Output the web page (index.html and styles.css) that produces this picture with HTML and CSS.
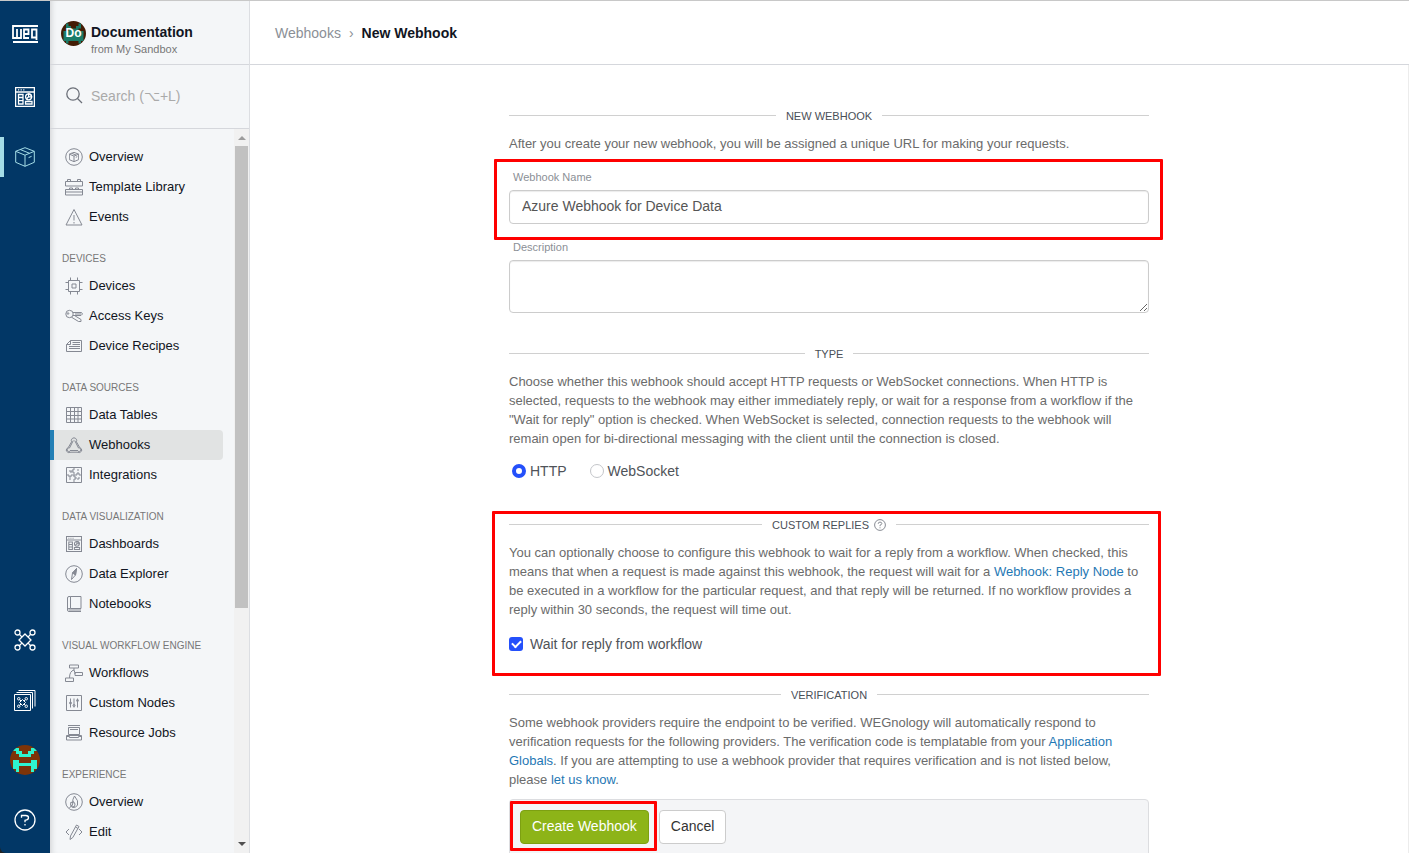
FILE: index.html
```html
<!DOCTYPE html>
<html lang="en">
<head>
    <meta charset="UTF-8">
    <meta name="viewport" content="width=device-width, initial-scale=1.0">
    <title>New Webhook</title>
    <link rel="stylesheet" href="styles.css">
</head>
<body>
    <svg class="defs" width="0" height="0" aria-hidden="true">
        <symbol id="dashboard" viewBox="0 0 20 20">
            <path d="M.6.6h18.800v18.800H.6zM.6 5h18.800M3 2.800h1.200M5.600 2.800h1.200M8.200 2.800h1.200M3.500 7.500h4.500v9.500h-4.500zM3.500 10.500h4.500M3.500 13.700h4.500M10.500 14.500h6.500v2.500h-6.500z"/>
            <circle cx="13.600" cy="9.800" r="3"/>
            <path d="M13.600 9.800V6.800a3 3 0 0 1 3 3zM13.600 9.800l-2 2"/>
        </symbol>
        <symbol id="nodes" viewBox="0 0 22 22">
            <path d="M11 5l6 6-6 6-6-6zM5.300 5.300l2.800 2.800M16.700 5.300l-2.800 2.800M5.300 16.700l2.800-2.800M16.700 16.700l-2.800-2.800"/>
            <circle cx="3.500" cy="3.500" r="2.500"/><circle cx="18.500" cy="3.500" r="2.500"/>
            <circle cx="3.500" cy="18.500" r="2.500"/><circle cx="18.500" cy="18.500" r="2.500"/>
        </symbol>
        <symbol id="cube" viewBox="0 0 20 20">
            <path d="M10 .7l9.300 3.600v11L10 19.300.7 15.300v-11zM.7 4.300L10 8.200l9.300-3.900M10 8.200v11.100M5.200 2.500l9.400 3.800M16.600 9.300l-3 1.300"/>
        </symbol>
    </svg>

    <div class="app">
        <nav class="rail">
            <a class="rail-item rail-logo" href="#" aria-label="Home">
                <svg width="26" height="18" viewBox="0 0 26 18">
                    <path class="weg" d="M26 1H1v12h8V4M5 4v9M17 13h-5V4.500h4.500v4.500H12M24.500 12.500H20v-8h4.500V15M1 17h25"/>
                </svg>
            </a>
            <a class="rail-item" href="#" aria-label="Dashboards"><svg class="thick" width="20" height="20"><use href="#dashboard"/></svg></a>
            <a class="rail-item current" href="#" aria-label="Applications"><svg width="20" height="20"><use href="#cube"/></svg></a>
            <a class="rail-item bottom-start" href="#" aria-label="Workflows"><svg class="thick" width="22" height="22"><use href="#nodes"/></svg></a>
            <a class="rail-item" href="#" aria-label="Templates">
                <svg width="22" height="22" viewBox="0 0 22 22">
                    <path d="M.5 5.500h16v16H.5zM2.500 3.500h16v16M4.500 1.500h16.500v16"/>
                    <use href="#nodes" x="3" y="8" width="11" height="11" class="mini"/>
                </svg>
            </a>
            <a class="rail-item" href="#" aria-label="Account">
                <svg class="face" width="30" height="30" viewBox="0 0 10 10">
                    <rect width="10" height="10" fill="#7d3408"/>
                    <path fill="#2ef5cf" d="M1 1h2v1h1v1h2V2h1V1h2v1H8v1H7v1H3V3H2V2H1zM1 5h2v1h4V5h2v3H8v1H7V7H3v2H2V8H1z"/>
                </svg>
            </a>
            <a class="rail-item" href="#" aria-label="Help">
                <svg class="thick" width="22" height="22" viewBox="0 0 22 22">
                    <circle cx="11" cy="11" r="10"/>
                    <path d="M7.500 8.700V6.500h4.200q2.800 0 2.800 2.200t-3.500 2.600v2M11 15v1.500"/>
                </svg>
            </a>
        </nav>

        <aside class="sidebar">
            <div class="app-head">
                <div class="avatar">
                    <svg width="25" height="25" viewBox="0 0 10 10">
                        <rect width="10" height="10" fill="#431c05"/>
                        <path fill="#1b7b68" d="M2 1h1v1h1v1h2V2h1V1h1v2H7v1h2v4H8v1H7V8H3v1H2V8H1V4h2V3H2z"/>
                    </svg>
                    <span>Do</span>
                </div>
                <div class="app-title">
                    <div class="app-name">Documentation</div>
                    <div class="app-owner">from My Sandbox</div>
                </div>
            </div>
            <label class="search">
                <svg class="thick" width="17" height="17" viewBox="0 0 17 17"><circle cx="7" cy="7" r="6.200"/><path d="M11.500 11.500l4.500 4.500"/></svg>
                <input type="search" placeholder="Search (⌥+L)" aria-label="Search">
            </label>
            <div class="menu-wrap">
                <div class="menu">
                    <a class="menu-item" href="#"><svg viewBox="0 0 18 18"><circle cx="9" cy="9" r="8.300"/><use href="#cube" x="4" y="4" width="10" height="10" class="mini"/></svg>Overview</a>
                    <a class="menu-item" href="#"><svg viewBox="0 0 18 18"><path d="M.5 3.500h17v4.500H.5zM.5 11.500h17v5.500H.5zM.5 14h17M2.500 3.500v-2h3v2M12.500 3.500v-2h3v2M4.500 11.500V10h3v1.500M10.500 11.500V10h3v1.500"/></svg>Template Library</a>
                    <a class="menu-item" href="#"><svg viewBox="0 0 18 18"><path d="M9 1.500l8 15.500H1zM9 7v5.500M9 14v1.500"/></svg>Events</a>

                    <h2>DEVICES</h2>
                    <a class="menu-item" href="#"><svg viewBox="0 0 18 18"><path d="M3.500 3.500h11v11h-11zM7 7h4v4H7zM5.500.5v3M12.500.5v3M5.500 14.500v3M12.500 14.500v3M.5 5.500h3M.5 12.500h3M14.500 5.500h3M14.500 12.500h3"/></svg>Devices</a>
                    <a class="menu-item" href="#"><svg viewBox="0 0 18 18"><circle cx="4.500" cy="7" r="3.700"/><circle cx="3" cy="6.500" r=".8"/><path d="M8 5.500h8.500l1 1.500-1.500 1.500H8M10 7h6M6.500 10.200l7 4.300h2.500v-2l-6.500-4"/></svg>Access Keys</a>
                    <a class="menu-item" href="#"><svg viewBox="0 0 18 18"><path d="M5.500 3.500h11v11h-15v-7zM5.500 3.500v4h-4M7.500 5.500h7.500M7.500 7.500h7.500M4 9.500h11M4 11.500h11"/></svg>Device Recipes</a>

                    <h2>DATA SOURCES</h2>
                    <a class="menu-item" href="#"><svg viewBox="0 0 18 18"><path d="M1.500 1.500h15v15h-15zM1.500 5.500h15M1.500 9.500h15M1.500 13h15M5.500 1.500v15M9.500 1.500v15M13 1.500v15"/></svg>Data Tables</a>
                    <a class="menu-item active" href="#"><svg viewBox="0 0 18 18"><path d="M6.600 5.800a2.700 2.700 0 1 1 4.800 0M8.300 4.500L4.500 12M9.700 4.500l3.800 7.500M5 14.500h8M4.500 12a1.800 1.800 0 1 0 .5 3.200M13.500 12a1.800 1.800 0 1 1-.5 3.200M6.600 5.800L3.300 11.500q-2.500 1-2 3.500 1.500 2.500 4.700 1.200h6q3.200 1.300 4.700-1.200.5-2.500-2-3.500L11.400 5.800"/></svg>Webhooks</a>
                    <a class="menu-item" href="#"><svg viewBox="0 0 18 18"><path d="M1.500 1.500h15v15h-15zM9 1.500v2.500H7v2h2v2.500M16.500 9H14V7h-2v2H9v2h2v2H9v3.500M1.500 9H4v2h2V9h3M4 5h2v2M12 4h2M12 13h2v-2M4 13h2"/></svg>Integrations</a>

                    <h2>DATA VISUALIZATION</h2>
                    <a class="menu-item" href="#"><svg class="thick" viewBox="0 0 18 18"><use href="#dashboard" x="1" y="1" width="16" height="16"/></svg>Dashboards</a>
                    <a class="menu-item" href="#"><svg viewBox="0 0 18 18"><circle cx="9" cy="9" r="8.300"/><path d="M11.500 3.500L10.500 10 6.500 14.500l1-6.500z"/><path class="solid" d="M11.500 3.500L10.500 10l-3-2z"/></svg>Data Explorer</a>
                    <a class="menu-item" href="#"><svg viewBox="0 0 18 18"><path d="M5.500 1.500h10.500v12H5.500zM5.500 1.500H4q-1.500 0-1.500 1.500v12q0 1.500 1.500 1.500h12M5.500 13.500H4q-1.500 0-1.500 1.500M4 15h12"/></svg>Notebooks</a>

                    <h2>VISUAL WORKFLOW ENGINE</h2>
                    <a class="menu-item" href="#"><svg viewBox="0 0 18 18"><path d="M4.500 1h9v3h-9zM10 8.500h7.500v3H10zM.5 14h8v3.500h-8zM9 4v2q-4.500 1-4.500 8M9 6q1 2.500 1 4"/></svg>Workflows</a>
                    <a class="menu-item" href="#"><svg viewBox="0 0 18 18"><path d="M1.500 1.500h15v15h-15zM5.500 4.500v9M9 4.500v9M12.500 4.500v9"/><circle cx="5.500" cy="9" r="1"/><circle cx="9" cy="11.500" r="1"/><circle cx="12.500" cy="6.500" r="1"/></svg>Custom Nodes</a>
                    <a class="menu-item" href="#"><svg viewBox="0 0 18 18"><path d="M3 1.500h12M3.500 3.500h11v7h-11zM1.500 11.500h15v4.500h-15zM1.500 12.500h3v1h9v-1h3M5 5.500h8"/></svg>Resource Jobs</a>

                    <h2>EXPERIENCE</h2>
                    <a class="menu-item" href="#"><svg viewBox="0 0 18 18"><circle cx="9" cy="9" r="8.300"/><path d="M9.500 3q4.500 5 3 9-1.500 3-4.500 2.500-3.500-1-2-5.500l1.500 1q0-4 2-7zM8.500 8.500q2.500 2.500 1 5-2 1-2.500-1zM4.500 15l3-3.500"/></svg>Overview</a>
                    <a class="menu-item" href="#"><svg viewBox="0 0 18 18"><path d="M4 6L1 9l3 3M14 6l3 3-3 3M5.500 13L11.500 2l2.500 1.500L7.800 14.500 5 16.500zM10.500 4l2.500 1.500"/></svg>Edit</a>
                </div>
                <div class="scrollbar" aria-hidden="true">
                    <i class="arrow up"></i>
                    <div class="track"><div class="thumb"></div></div>
                    <i class="arrow down"></i>
                </div>
            </div>
        </aside>

        <div class="page">
            <header class="crumbs">
                <a href="#">Webhooks</a>
                <span class="sep">›</span>
                <strong>New Webhook</strong>
            </header>
            <main class="content">
                <form class="webhook-form">
                    <section>
                        <h3 class="divider">NEW WEBHOOK</h3>
                        <p>After you create your new webhook, you will be assigned a unique URL for making your requests.</p>
                        <div class="field marked mark-name">
                            <label for="name">Webhook Name</label>
                            <input type="text" id="name" value="Azure Webhook for Device Data">
                        </div>
                        <div class="field last">
                            <label for="description">Description</label>
                            <textarea id="description"></textarea>
                        </div>
                    </section>

                    <section>
                        <h3 class="divider">TYPE</h3>
                        <p>Choose whether this webhook should accept HTTP requests or WebSocket connections. When HTTP is selected, requests to the webhook may either immediately reply, or wait for a response from a workflow if the "Wait for reply" option is checked. When WebSocket is selected, connection requests to the webhook will remain open for bi-directional messaging with the client until the connection is closed.</p>
                        <div class="radios">
                            <label><input type="radio" name="type" checked>HTTP</label>
                            <label><input type="radio" name="type">WebSocket</label>
                        </div>
                    </section>

                    <section class="marked mark-replies">
                        <h3 class="divider">
                            <span>CUSTOM REPLIES</span>
                            <svg width="12" height="12" viewBox="0 0 12 12"><circle cx="6" cy="6" r="5.400"/><path d="M4.200 4.800q0-1.700 1.800-1.700t1.800 1.500q0 1-1.800 1.600v1M6 8.300v1"/></svg>
                        </h3>
                        <p>You can optionally choose to configure this webhook to wait for a reply from a workflow. When checked, this means that when a request is made against this webhook, the request will wait for a <a href="#">Webhook: Reply Node</a> to be executed in a workflow for the particular request, and that reply will be returned. If no workflow provides a reply within 30 seconds, the request will time out.</p>
                        <label class="check"><input type="checkbox" checked>Wait for reply from workflow</label>
                    </section>

                    <section>
                        <h3 class="divider">VERIFICATION</h3>
                        <p class="tight">Some webhook providers require the endpoint to be verified. WEGnology will automatically respond to verification requests for the following providers. The verification code is templatable from your <a href="#">Application Globals</a>. If you are attempting to use a webhook provider that requires verification and is not listed below, please <a href="#">let us know</a>.</p>
                    </section>

                    <div class="actions">
                        <div class="marked mark-create">
                            <button type="submit" class="btn btn-primary">Create Webhook</button>
                        </div>
                        <button type="button" class="btn">Cancel</button>
                    </div>
                </form>
            </main>
        </div>
    </div>
</body>
</html>
```
FILE: styles.css
```css
* {
    box-sizing: border-box;
}
body {
    margin: 0;
    font-family: "Liberation Sans", Arial, sans-serif;
    font-size: 14px;
    line-height: 20px;
    color: #4f5359;
    background-color: #222;
}
a {
    color: #1f78b4;
    text-decoration: none;
}
svg {
    display: block;
    flex: none;
    fill: none;
    stroke: currentColor;
}
.defs {
    position: absolute;
}
.mini {
    stroke-width: 2;
}
.thick {
    stroke-width: 1.3;
}
.app {
    display: flex;
    height: 100vh;
    border-top: 1px solid #c8c8c8;
    overflow: hidden;
}

/* Left rail */
.rail {
    display: flex;
    flex-direction: column;
    gap: 20px;
    flex: none;
    width: 50px;
    padding: 13px 0;
    background-color: #023766;
    border-bottom-left-radius: 6px;
}
.rail-item {
    display: flex;
    align-items: center;
    justify-content: center;
    height: 40px;
    color: #fff;
    border-left: 4px solid transparent;
    padding-right: 4px;
}
.rail-logo {
    margin-bottom: 3px;
}
.weg {
    stroke-width: 1.8;
}
.rail-item.current {
    color: #a4dce6;
    border-left-color: #a4dce6;
}
.bottom-start {
    margin-top: auto;
}
.face {
    border-radius: 50%;
    stroke: none;
}

/* Sidebar */
.sidebar {
    display: flex;
    flex-direction: column;
    flex: none;
    width: 200px;
    background-color: #f4f6f8;
    border-right: 1px solid #dcdee2;
    box-shadow: inset 6px 0 6px -5px rgba(0, 0, 0, 0.16);
}
.app-head {
    display: flex;
    gap: 5px;
    flex: none;
    height: 64px;
    padding: 20px 11px 0;
    border-bottom: 1px solid #d5d7dc;
}
.avatar {
    position: relative;
    width: 25px;
    height: 25px;
    border-radius: 50%;
    overflow: hidden;
}
.avatar svg {
    stroke: none;
}
.avatar span {
    position: absolute;
    inset: 0;
    color: #fff;
    font-size: 12px;
    font-weight: bold;
    line-height: 24px;
    text-align: center;
}
.app-title {
    padding-top: 2px;
}
.app-name {
    color: #111522;
    font-weight: bold;
    line-height: 18px;
}
.app-owner {
    color: #777;
    font-size: 11px;
    line-height: 16px;
}
.search {
    display: flex;
    align-items: center;
    gap: 8px;
    flex: none;
    height: 64px;
    padding: 0 16px 2px;
    color: #6b6f78;
    border-bottom: 1px solid #d5d7dc;
}
.search input {
    width: 100%;
    min-width: 0;
    padding: 0;
    border: none;
    outline: none;
    background: none;
    font: inherit;
}
.search input::placeholder {
    color: #aaa;
}
.menu-wrap {
    display: flex;
    flex: 1;
    min-height: 0;
}
.menu {
    flex: 1;
    padding: 13px 11px 0 0;
    overflow: hidden;
}
.menu h2 {
    margin: 0;
    padding: 17px 0 2px 12px;
    color: #777;
    font-size: 10px;
    font-weight: normal;
    line-height: 20px;
    white-space: nowrap;
}
.menu-item {
    display: flex;
    align-items: center;
    gap: 6px;
    height: 30px;
    padding-left: 11px;
    border-left: 4px solid transparent;
    border-radius: 0 4px 4px 0;
    color: #111522;
    font-size: 13px;
    line-height: 20px;
}
.menu-item svg {
    width: 18px;
    height: 18px;
    color: #858993;
}
.menu-item .solid {
    fill: currentColor;
}
.menu-item.active {
    background-color: #e1e3e3;
    border-left-color: #237fb5;
}
.scrollbar {
    display: flex;
    flex-direction: column;
    align-items: center;
    width: 15px;
    background-color: #f1f1f1;
}
.arrow {
    margin: 7px 0 6px;
    border: 4px solid transparent;
}
.arrow.up {
    margin-top: 3px;
    border-bottom-color: #9c9c9c;
}
.arrow.down {
    margin-bottom: 3px;
    border-top-color: #505050;
}
.track {
    flex: 1;
    width: 13px;
}
.thumb {
    height: 67%;
    background-color: #c1c1c1;
}

/* Page */
.page {
    display: flex;
    flex-direction: column;
    flex: 1;
    min-width: 0;
    background-color: #fff;
}
.crumbs {
    display: flex;
    align-items: center;
    gap: 8px;
    flex: none;
    height: 64px;
    padding: 0 25px;
    border-bottom: 1px solid #d5d7dc;
}
.crumbs a,
.crumbs .sep {
    color: #8b8f96;
}
.crumbs strong {
    color: #111522;
}
.content {
    flex: 1;
    min-height: 0;
    padding: 40px 20px 0;
    border-right: 1px solid #ececec;
    overflow: hidden;
}
.webhook-form {
    max-width: 640px;
    margin: 0 auto;
}
.divider {
    display: flex;
    align-items: center;
    gap: 10px;
    margin: 0 0 7px;
    color: #4a4f57;
    font-size: 11px;
    font-weight: normal;
    line-height: 22px;
}
.divider::before,
.divider::after {
    content: "";
    flex: 1;
    height: 1px;
    margin-bottom: 2px;
    background-color: #d0d0d0;
}
.divider svg {
    margin-left: -5px;
    color: #888c94;
}
.webhook-form p {
    margin: 0 0 13px;
    color: #6b6b6b;
    font-size: 13px;
    line-height: 19px;
}
.webhook-form .tight {
    margin-bottom: 10px;
}
.field {
    margin-bottom: 12px;
}
.field.last {
    margin-bottom: 30px;
}
.field label {
    display: block;
    padding: 3px 4px 5px;
    color: #8b8f96;
    font-size: 11px;
    line-height: 16px;
}
.field input,
.field textarea {
    display: block;
    width: 100%;
    height: 34px;
    padding: 5px 12px 7px;
    border: 1px solid #ccc;
    border-radius: 4px;
    background-color: #fff;
    box-shadow: inset 0 1px 1px rgba(0, 0, 0, 0.08);
    color: #555;
    font: inherit;
}
.field textarea {
    height: 53px;
    resize: vertical;
}
.radios {
    display: flex;
    gap: 23px;
    margin-bottom: 33px;
    padding-left: 3px;
}
.radios label,
.check {
    display: flex;
    align-items: center;
    gap: 4px;
}
.check {
    gap: 7px;
    padding: 2px 0 30px;
}
.radios input,
.check input {
    appearance: none;
    width: 14px;
    height: 14px;
    margin: 0;
    border: 1px solid #c4c6ca;
    border-radius: 50%;
    background-color: #fff;
}
.radios input:checked {
    border: 4px solid #2450fb;
}
.check input {
    display: grid;
    place-items: center;
    border: none;
    border-radius: 3px;
    background-color: #2450fb;
}
.check input::before {
    content: "";
    width: 7px;
    height: 4px;
    margin-bottom: 2px;
    border: solid #fff;
    border-width: 0 0 2px 2px;
    transform: rotate(-45deg);
}
.actions {
    display: flex;
    gap: 10px;
    padding: 10px 10px 20px;
    border: 1px solid #dcdde0;
    border-radius: 4px;
    background-color: #f4f5f7;
}
.btn {
    display: block;
    height: 34px;
    padding: 0 11px 2px;
    border: 1px solid #ccc;
    border-radius: 4px;
    background-color: #fff;
    color: #333;
    font: inherit;
    cursor: pointer;
}
.btn-primary {
    border-color: #7da012;
    background-color: #8db418;
    color: #fff;
}

/* Red callout frames */
.marked {
    position: relative;
}
.marked::after {
    content: "";
    position: absolute;
    border: 3px solid #f00;
    border-radius: 1px;
    pointer-events: none;
}
.mark-name::after {
    inset: -7px -14px -16px -15px;
}
.mark-replies::after {
    inset: -3px -12px 8px -17px;
}
.mark-create::after {
    inset: -9px -8px -7px -10px;
}
```
